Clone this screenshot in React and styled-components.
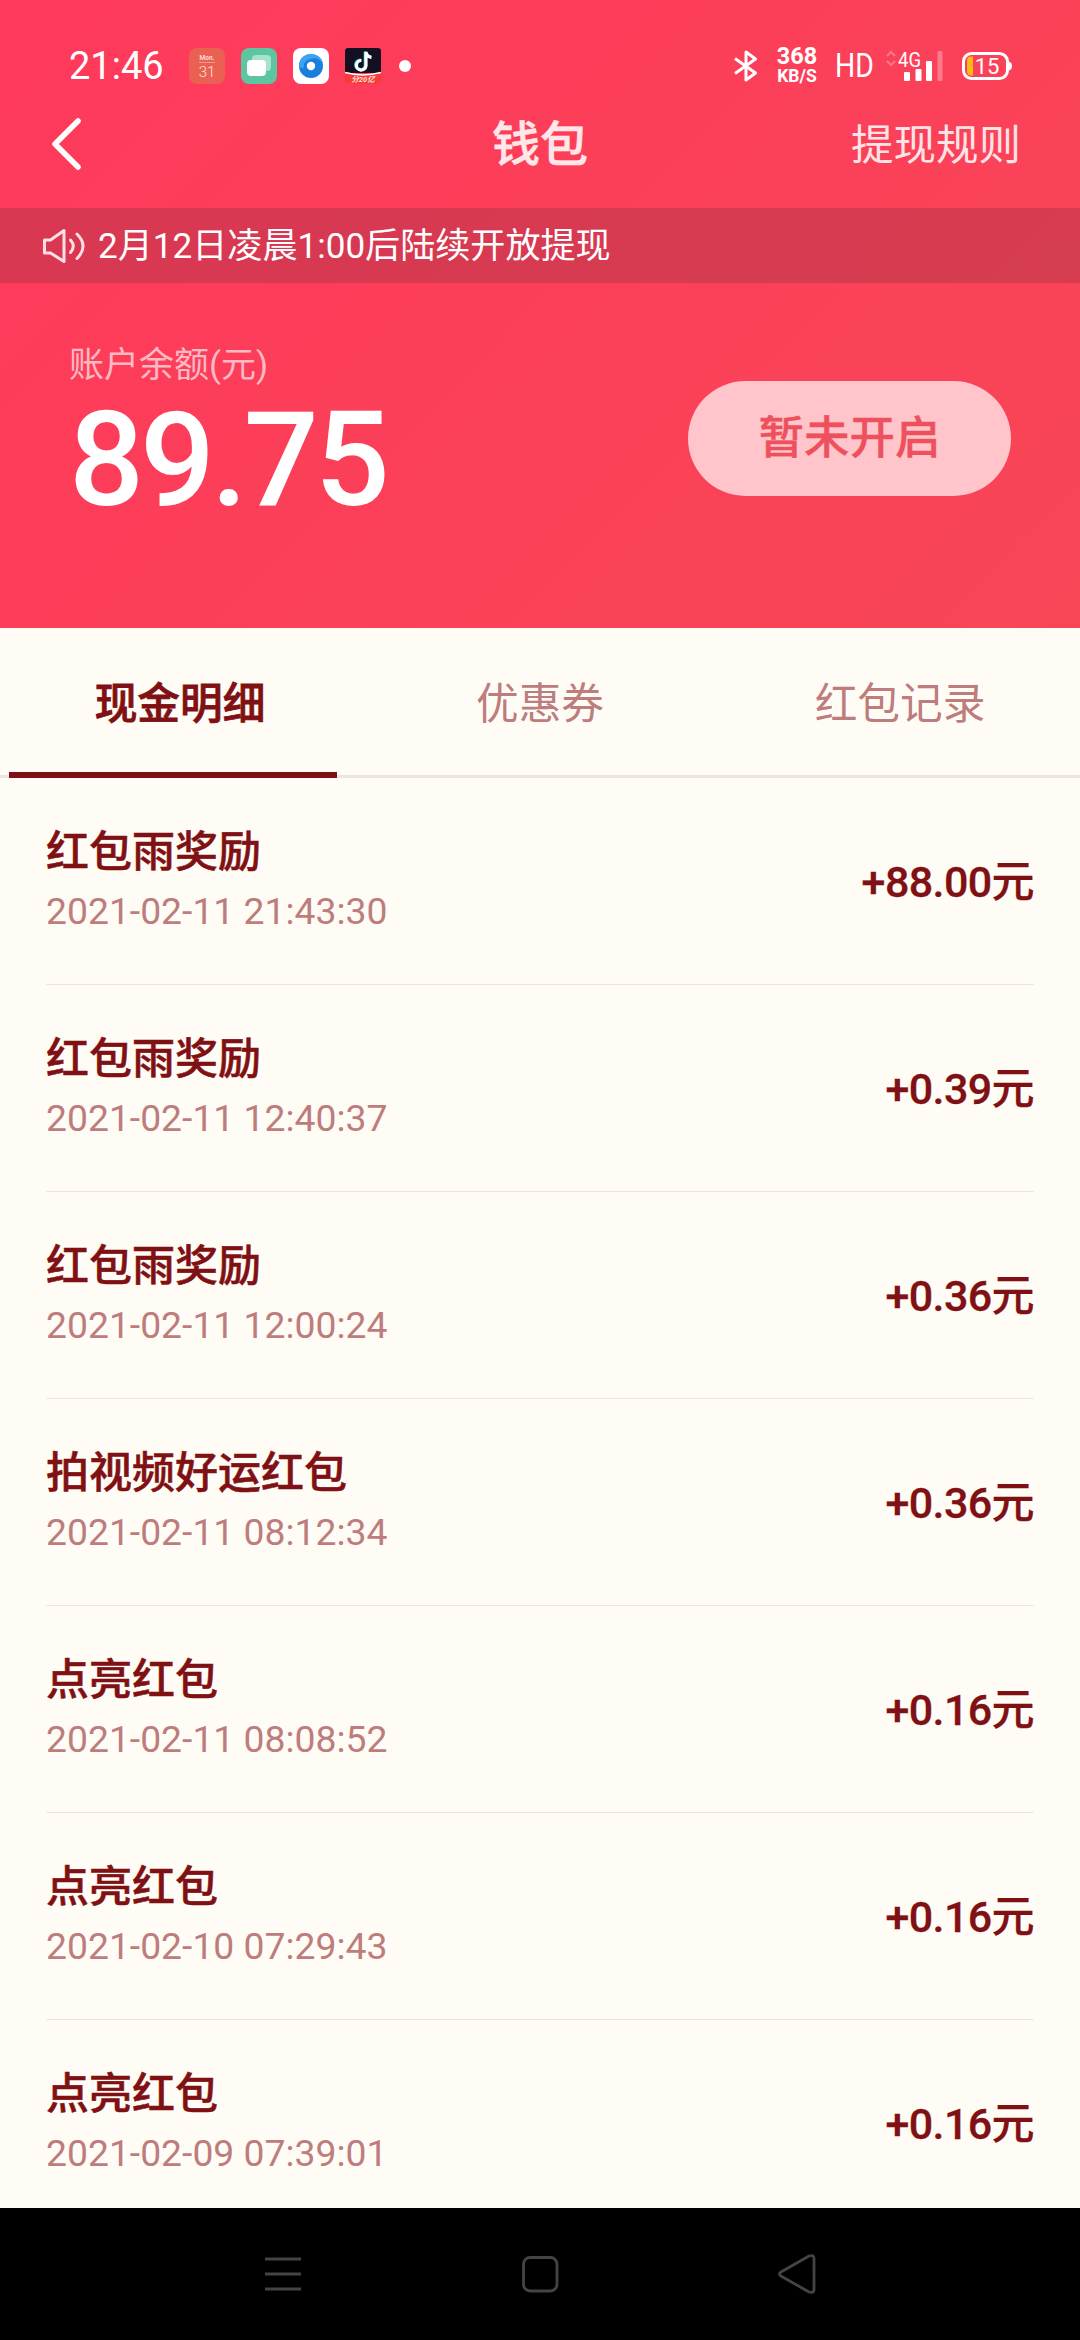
import React from 'react';
import styled, {createGlobalStyle} from 'styled-components';

const records = [
  {name: '红包雨奖励', time: '2021-02-11 21:43:30', amount: '+88.00元'},
  {name: '红包雨奖励', time: '2021-02-11 12:40:37', amount: '+0.39元'},
  {name: '红包雨奖励', time: '2021-02-11 12:00:24', amount: '+0.36元'},
  {name: '拍视频好运红包', time: '2021-02-11 08:12:34', amount: '+0.36元'},
  {name: '点亮红包', time: '2021-02-11 08:08:52', amount: '+0.16元'},
  {name: '点亮红包', time: '2021-02-10 07:29:43', amount: '+0.16元'},
  {name: '点亮红包', time: '2021-02-09 07:39:01', amount: '+0.16元'},
];

const tabs = ['现金明细', '优惠券', '红包记录'];

const CalendarIcon = () => (
  <svg width="36" height="36" viewBox="0 0 36 36">
    <rect width="36" height="36" rx="8" fill="#ea6153"/>
    <text x="18" y="12" fontSize="6.5" fontWeight="700" textAnchor="middle" fill="#ffd9d0">Mon.</text>
    <path d="M10 14.5h16" stroke="#f79a8c" strokeWidth="1"/>
    <text x="18" y="29" fontSize="15" fontWeight="300" textAnchor="middle" fill="#ffe4dc">31</text>
  </svg>
);

const CardsIcon = () => (
  <svg width="36" height="36" viewBox="0 0 36 36">
    <rect width="36" height="36" rx="8" fill="#5cc6a0"/>
    <rect x="11" y="7" width="19" height="16" rx="4" fill="#a5e3cd"/>
    <rect x="6" y="12" width="19" height="16" rx="4" fill="#fff"/>
  </svg>
);

const EyeIcon = () => (
  <svg width="36" height="36" viewBox="0 0 36 36">
    <rect width="36" height="36" rx="8" fill="#fff"/>
    <circle cx="18" cy="18" r="12" fill="#1a7fdc"/>
    <path d="M6 18C6 10 12 6 18 6c7 0 12 5 12 11-2-6-8-8-13-6-5 1.500-7 5-6 9-3 0-5-1-5-2z" fill="#3ca2f2"/>
    <circle cx="18" cy="18" r="4.200" fill="#fff"/>
  </svg>
);

const DouyinIcon = () => (
  <svg width="36" height="36" viewBox="0 0 36 36">
    <path d="M3 0h30a3 3 0 0 1 3 3v22H0V3a3 3 0 0 1 3-3z" fill="#140f22"/>
    <path d="M0 24q18 6 36 0v7a5 5 0 0 1-5 5H5a5 5 0 0 1-5-5z" fill="#f83a3c"/>
    <path d="M0 24.500q18 5 36 0" stroke="#fff" strokeWidth="1.500" fill="none"/>
    <path d="M16.500 12.500a4.800 4.800 0 1 0 4.500 5.500V4c.5 3.500 2.500 5 5.500 5.300" stroke="#31d8df" strokeWidth="3" fill="none" transform="translate(-.8 -.5)"/>
    <path d="M16.500 12.500a4.800 4.800 0 1 0 4.500 5.500V4c.5 3.500 2.500 5 5.500 5.300" stroke="#fff" strokeWidth="3.200" fill="none"/>
    <text x="18" y="33.500" fontSize="7.500" fontWeight="700" fontStyle="italic" textAnchor="middle" fill="#ffe0d0">分20亿</text>
  </svg>
);

const BluetoothIcon = () => (
  <svg width="24" height="32" viewBox="0 0 24 32" fill="none" stroke="#fff" strokeWidth="3" strokeLinejoin="round">
    <path d="M1 8.500l20.500 14.500-9.500 7V2l9.500 7L1 23.500"/>
  </svg>
);

const SignalIcon = () => (
  <svg width="58" height="34" viewBox="0 0 58 34">
    <path d="M1 7l4-4 4 4M1 12l4 4 4-4" stroke="#fff" strokeOpacity=".3" strokeWidth="2" fill="none"/>
    <text x="12" y="17.500" fontSize="20" textLength="23" lengthAdjust="spacingAndGlyphs" fill="#fff">4G</text>
    <rect x="18" y="23" width="6" height="9" rx="1" fill="#fff"/>
    <rect x="29.500" y="20" width="6" height="12" rx="1" fill="#fff"/>
    <rect x="40" y="12" width="6" height="20" rx="1" fill="#fff"/>
    <rect x="51.500" y="2" width="5" height="30" rx="1" fill="#fff" fillOpacity=".3"/>
  </svg>
);

const BatteryIcon = () => (
  <svg width="50" height="30" viewBox="0 0 50 30">
    <rect x="1.500" y="2.500" width="44" height="25" rx="8" fill="none" stroke="#fff" strokeWidth="3"/>
    <path d="M47 10.500q3 1 3 4.500t-3 4.500z" fill="#fff"/>
    <path d="M11 5.500v19H9a4 4 0 0 1-4-4v-11a4 4 0 0 1 4-4z" fill="#fdb813"/>
    <text x="25" y="23" fontSize="22" textAnchor="middle" fill="#fff">15</text>
  </svg>
);

const BackIcon = () => (
  <svg width="32" height="56" viewBox="0 0 32 56" fill="none" stroke="#fff" strokeWidth="5.500" strokeLinecap="round" strokeLinejoin="round">
    <path d="M28 5L5 28l23 23"/>
  </svg>
);

const SpeakerIcon = () => (
  <svg width="44" height="36" viewBox="0 0 44 36" fill="none" stroke="#ffdfe3" strokeWidth="3" strokeLinejoin="round" strokeLinecap="round">
    <path d="M2.500 12h6L22 2.500v31L8.500 25h-6z"/>
    <path d="M28.500 12q5.500 6 0 12.500M35 6q12 12 0 24.500"/>
  </svg>
);

const MenuIcon = () => (
  <svg width="40" height="40" viewBox="0 0 40 40" stroke="#444" strokeWidth="3">
    <path d="M2 5h36M2 20h36M2 35h36"/>
  </svg>
);

const HomeIcon = () => (
  <svg width="40" height="40" viewBox="0 0 40 40">
    <rect x="3.500" y="3.500" width="33.500" height="33.500" rx="6.500" fill="none" stroke="#444" strokeWidth="2.800"/>
  </svg>
);

const ReturnIcon = () => (
  <svg width="40" height="40" viewBox="0 0 40 40" fill="none" stroke="#444" strokeWidth="2.800" strokeLinejoin="round">
    <path d="M3.500 18.200L32 2q5-1.500 5 2.500v31q0 4-5 2.500L3.500 21.800q-2-1.800 0-3.600z"/>
  </svg>
);

const App = () => (
  <Screen>
    <GlobalStyle/>
    <Hero>
      <StatusBar>
        <Clock>21:46</Clock>
        <AppIcons>
          <CalendarIcon/>
          <CardsIcon/>
          <EyeIcon/>
          <DouyinIcon/>
        </AppIcons>
        <Dot/>
        <Indicators>
          <BluetoothIcon/>
          <Speed>
            <b>368</b>
            <small>KB/S</small>
          </Speed>
          <Hd>HD</Hd>
          <SignalIcon/>
          <BatteryIcon/>
        </Indicators>
      </StatusBar>

      <NavBar>
        <BackIcon/>
        <Title>钱包</Title>
        <Rules>提现规则</Rules>
      </NavBar>

      <Notice>
        <SpeakerIcon/>
        <span>2月12日凌晨1:00后陆续开放提现</span>
      </Notice>

      <Balance>
        <div>
          <BalanceLabel>账户余额(元)</BalanceLabel>
          <BalanceValue>89.75</BalanceValue>
        </div>
        <WithdrawButton>暂未开启</WithdrawButton>
      </Balance>
    </Hero>

    <TabBar>
      {tabs.map((tab, i) => (
        <Tab key={tab} $active={i === 0}>{tab}</Tab>
      ))}
    </TabBar>

    <List>
      {records.map(record => (
        <Row key={record.time}>
          <div>
            <Name>{record.name}</Name>
            <Time>{record.time}</Time>
          </div>
          <Amount>{record.amount}</Amount>
        </Row>
      ))}
    </List>

    <SystemBar>
      <MenuIcon/>
      <HomeIcon/>
      <ReturnIcon/>
    </SystemBar>
  </Screen>
);

export default App;

const GlobalStyle = createGlobalStyle`
  body {
    margin: 0;
    font-family: Roboto, "Noto Sans CJK SC", sans-serif;
  }

  svg {
    display: block;
    flex: none;
  }
`;

const Screen = styled.div`
  display: flex;
  flex-direction: column;
  width: 1080px;
  height: 2340px;
  overflow: hidden;
  background: #fffcf5;
`;

const Hero = styled.header`
  flex: none;
  height: 628px;
  background: linear-gradient(135deg, #ff395b 0%, #f84657 100%);
  color: #fff;
`;

const StatusBar = styled.div`
  display: flex;
  align-items: center;
  height: 60px;
  padding: 36px 68px 0 69px;
`;

const Clock = styled.span`
  width: 120px;
  font-size: 38px;
  line-height: 44px;
`;

const AppIcons = styled.div`
  display: flex;
  gap: 16px;
`;

const Dot = styled.span`
  width: 12px;
  height: 12px;
  margin-left: 18px;
  border-radius: 50%;
  background: #fff;
`;

const Indicators = styled.div`
  display: flex;
  align-items: center;
  margin-left: auto;

  svg:last-child {
    margin-left: 18px;
  }
`;

const Speed = styled.div`
  display: flex;
  flex-direction: column;
  align-items: center;
  width: 42px;
  margin-left: 18px;

  b {
    font-size: 23.500px;
    line-height: 21px;
  }

  small {
    font-size: 17.500px;
    font-weight: 700;
    line-height: 19px;
  }
`;

const Hd = styled.span`
  width: 44px;
  margin: 0 7px 0 17px;
  font-size: 33px;
  line-height: 40px;
  transform: scaleX(.86);
  transform-origin: left;
`;

const NavBar = styled.div`
  display: flex;
  align-items: center;
  justify-content: space-between;
  height: 96px;
  margin-bottom: 16px;
  padding: 0 59px 0 50px;
`;

const Title = styled.h1`
  margin: 2px 0 0 147px;
  font-size: 48px;
  font-weight: 500;
  line-height: 60px;
  color: #ffe6e8;
  -webkit-text-stroke: .6px;
`;

const Rules = styled.span`
  margin-top: 3px;
  font-size: 42.500px;
  line-height: 60px;
  color: #ffe3e6;
`;

const Notice = styled.div`
  display: flex;
  align-items: center;
  gap: 12px;
  height: 75px;
  padding-left: 42px;
  background: rgba(71, 41, 52, .2);
  font-size: 35.100px;

  span {
    line-height: 40px;
  }
`;

const Balance = styled.div`
  display: flex;
  justify-content: space-between;
  align-items: flex-start;
  padding: 60px 69px 0 69px;
`;

const BalanceLabel = styled.div`
  font-size: 35px;
  line-height: 46px;
  color: #ffb9c2;
`;

const BalanceValue = styled.div`
  margin-top: 11px;
  font-size: 132px;
  font-weight: 500;
  line-height: 120px;
  letter-spacing: -4px;
`;

const WithdrawButton = styled.button`
  width: 323px;
  height: 115px;
  margin-top: 38px;
  padding: 0;
  border: 0;
  border-radius: 58px;
  background: #ffc5cb;
  color: #ee515d;
  font-family: inherit;
  font-size: 45.500px;
  font-weight: 500;
  line-height: 54px;
  -webkit-text-stroke: .4px;
`;

const TabBar = styled.nav`
  display: flex;
  flex: none;
  box-sizing: border-box;
  height: 150px;
  border-bottom: 3px solid #ebe6e1;
`;

const Tab = styled.div`
  position: relative;
  flex: 1;
  text-align: center;
  font-size: 42.700px;
  font-weight: ${props => props.$active ? 500 : 400};
  line-height: 152px;
  color: ${props => props.$active ? '#7f1014' : '#bd7d7d'};
  -webkit-text-stroke: ${props => props.$active ? '.8px' : '0'};

  /* underline sits on top of the bar's border */
  &::after {
    content: '';
    display: ${props => props.$active ? 'block' : 'none'};
    position: absolute;
    left: 9px;
    bottom: -3px;
    width: 328px;
    height: 6px;
    background: #7f1014;
  }
`;

const List = styled.main`
  flex: 1;
  min-height: 0;
  padding: 0 46px;
  overflow: hidden;
`;

const Row = styled.div`
  display: flex;
  justify-content: space-between;
  box-sizing: border-box;
  height: 207px;
  padding-top: 49px;
  border-bottom: 1px solid #ebe6e1;
`;

const Name = styled.div`
  font-size: 43px;
  font-weight: 500;
  line-height: 50px;
  color: #7f1014;
  -webkit-text-stroke: .5px;
`;

const Time = styled.div`
  margin-top: 10px;
  font-size: 37.300px;
  line-height: 48px;
  color: #bd7d7d;
`;

const Amount = styled.div`
  margin-top: 29px;
  font-size: 43px;
  font-weight: 500;
  line-height: 52px;
  letter-spacing: -.6px;
  color: #7f1014;
  -webkit-text-stroke: .3px;
`;

const SystemBar = styled.footer`
  display: flex;
  flex: none;
  align-items: center;
  justify-content: center;
  gap: 217px;
  height: 132px;
  background: #000;
`;
